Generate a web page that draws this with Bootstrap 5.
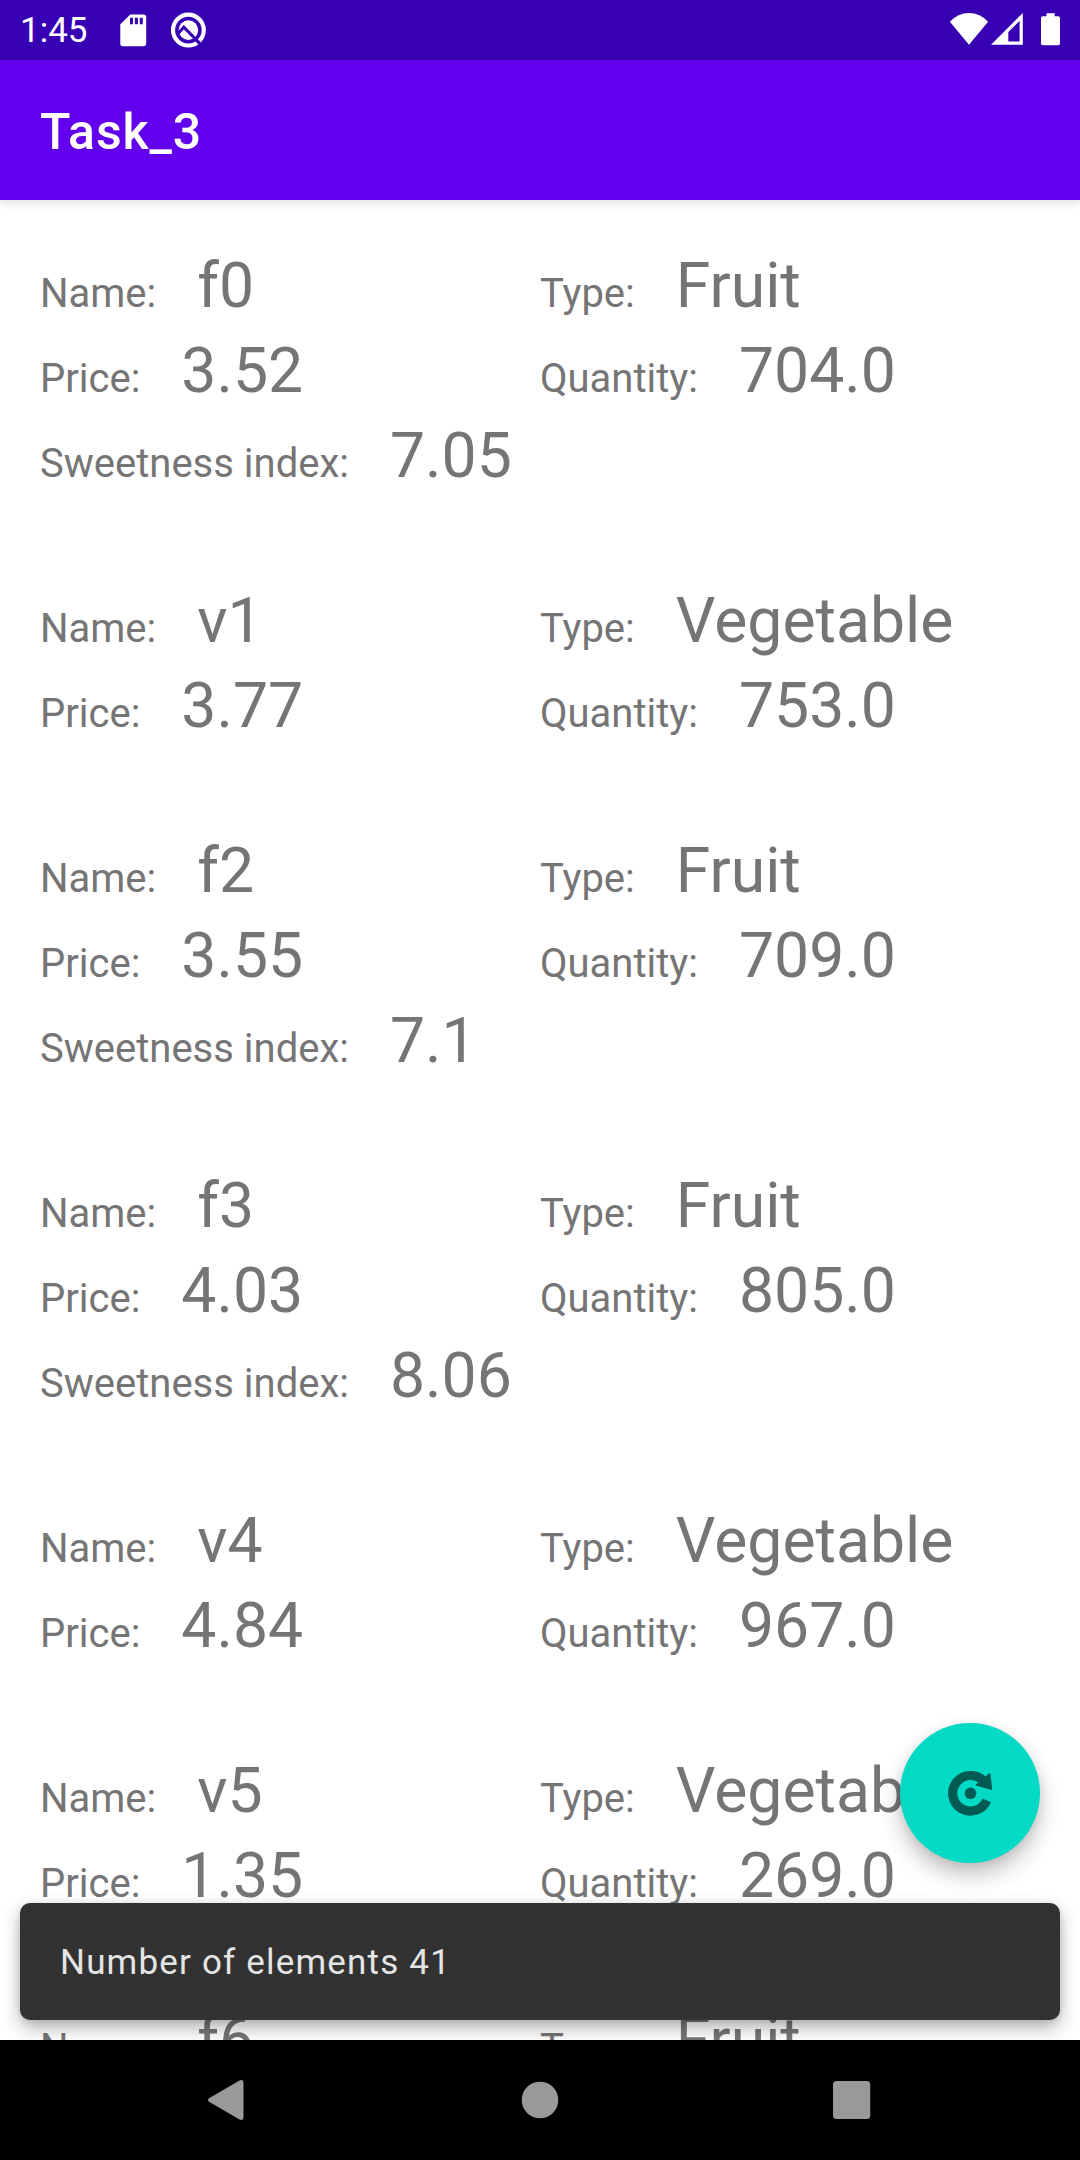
<!DOCTYPE html>
<html lang="en">
<head>
<meta charset="utf-8">
<meta name="viewport" content="width=device-width, initial-scale=1">
<title>Task_3</title>
<link href="https://cdn.jsdelivr.net/npm/bootstrap@5.3.0/dist/css/bootstrap.min.css" rel="stylesheet">
<style>
  body { font-family: Roboto, "Liberation Sans", sans-serif; color: #757575; background: #fff; }
  .screen { width: 1080px; height: 2160px; }
  .status-bar { height: 60px; background: #3700b3; padding: 0 20px; font-size: 35px; line-height: 58px; }
  .status-clock { width: 100px; padding-top: 2px; }
  .app-bar { height: 140px; padding: 4px 40px 0; background: #6200ee; z-index: 2; box-shadow: 0 3px 9px rgba(0,0,0,.13); }
  .app-title { font-size: 50px; font-weight: 500; letter-spacing: .9px; line-height: 60px; }
  .content-area { min-height: 0; }
  .produce-list { padding: 43px 40px 0; }
  .produce-item { margin-bottom: 80px; }
  .field { height: 85px; gap: 41px; white-space: nowrap; }
  .field dt { font-size: 40px; font-weight: 400; line-height: 85px; }
  .field dd { font-size: 62.5px; line-height: 85px; margin: 0; }
  .fab { right: 40px; bottom: 177px; width: 140px; height: 140px; background: #03dac5; border: 0;
         box-shadow: 0 12px 22px rgba(0,0,0,.24), 0 2px 10px rgba(0,0,0,.08); }
  .fab:hover { background: #03dac5; }
  .snackbar { left: 20px; right: 20px; bottom: 20px; height: 117px; padding: 4px 40px 0; border-radius: 10px;
              background: #323232; color: #e4e4e4; font-size: 35px; letter-spacing: 1.18px;
              box-shadow: 0 8px 18px rgba(0,0,0,.3), 0 1px 6px rgba(0,0,0,.1); }
  .nav-keys { height: 120px; background: #000; padding: 0 209px 0 208px; z-index: 3; }
</style>
</head>
<body>
<div class="screen d-flex flex-column overflow-hidden">
  <header class="status-bar d-flex align-items-center justify-content-between text-white flex-shrink-0">
    <div class="d-flex align-items-center">
      <span class="status-clock">1:45</span>
      <svg width="90" height="60" viewBox="120 0 90 60" fill="#fff">
        <path fill-rule="evenodd" d="M130.3 14.5H143.5a2.7 2.7 0 0 1 2.7 2.7V43.5a2.7 2.7 0 0 1-2.7 2.7H123a2.7 2.7 0 0 1-2.7-2.7V24.3ZM130 17.8V24.3H133V17.8ZM134.9 17.8V24.3H137.9V17.8ZM139.8 17.8V24.3H142.8V17.8Z"/>
        <circle cx="188.4" cy="30.1" r="15.4" fill="none" stroke="#fff" stroke-width="4.2"/>
        <circle cx="188.4" cy="30.1" r="9.8"/>
        <path d="M177.8 33.8 183.8 27.2 199.8 43.4" fill="none" stroke="#3700b3" stroke-width="3"/>
        <path d="M196.2 40.2 201.6 46.4" fill="none" stroke="#3700b3" stroke-width="2.6"/>
      </svg>
    </div>
    <svg width="112" height="60" viewBox="948 0 112 60" fill="#fff">
      <path d="M949.9 21.7Q958 13 969 13T988.1 21.7L969 44.7Z"/>
      <path fill-rule="evenodd" d="M991 44.8 1022.8 13V44.8ZM1008.3 41.6H1019.6V20.8L1008.3 32.1Z"/>
      <path d="M1046.5 13.2H1054.7V16.3H1058.2a1.8 1.8 0 0 1 1.8 1.8V43.5a1.8 1.8 0 0 1-1.8 1.8H1042.8a1.8 1.8 0 0 1-1.8-1.8V18.1a1.8 1.8 0 0 1 1.8-1.8H1046.5Z"/>
    </svg>
  </header>

  <nav class="app-bar navbar flex-shrink-0 position-relative">
    <h1 class="app-title text-white mb-0">Task_3</h1>
  </nav>

  <main class="content-area flex-grow-1 position-relative overflow-hidden">
    <div class="produce-list">
      <dl class="produce-item row g-0">
        <div class="field col-6 d-flex align-items-baseline"><dt>Name:</dt><dd>f0</dd></div>
        <div class="field col-6 d-flex align-items-baseline"><dt>Type:</dt><dd>Fruit</dd></div>
        <div class="field col-6 d-flex align-items-baseline"><dt>Price:</dt><dd>3.52</dd></div>
        <div class="field col-6 d-flex align-items-baseline"><dt>Quantity:</dt><dd>704.0</dd></div>
        <div class="field col-12 d-flex align-items-baseline"><dt>Sweetness index:</dt><dd>7.05</dd></div>
      </dl>
      <dl class="produce-item row g-0">
        <div class="field col-6 d-flex align-items-baseline"><dt>Name:</dt><dd>v1</dd></div>
        <div class="field col-6 d-flex align-items-baseline"><dt>Type:</dt><dd>Vegetable</dd></div>
        <div class="field col-6 d-flex align-items-baseline"><dt>Price:</dt><dd>3.77</dd></div>
        <div class="field col-6 d-flex align-items-baseline"><dt>Quantity:</dt><dd>753.0</dd></div>
      </dl>
      <dl class="produce-item row g-0">
        <div class="field col-6 d-flex align-items-baseline"><dt>Name:</dt><dd>f2</dd></div>
        <div class="field col-6 d-flex align-items-baseline"><dt>Type:</dt><dd>Fruit</dd></div>
        <div class="field col-6 d-flex align-items-baseline"><dt>Price:</dt><dd>3.55</dd></div>
        <div class="field col-6 d-flex align-items-baseline"><dt>Quantity:</dt><dd>709.0</dd></div>
        <div class="field col-12 d-flex align-items-baseline"><dt>Sweetness index:</dt><dd>7.1</dd></div>
      </dl>
      <dl class="produce-item row g-0">
        <div class="field col-6 d-flex align-items-baseline"><dt>Name:</dt><dd>f3</dd></div>
        <div class="field col-6 d-flex align-items-baseline"><dt>Type:</dt><dd>Fruit</dd></div>
        <div class="field col-6 d-flex align-items-baseline"><dt>Price:</dt><dd>4.03</dd></div>
        <div class="field col-6 d-flex align-items-baseline"><dt>Quantity:</dt><dd>805.0</dd></div>
        <div class="field col-12 d-flex align-items-baseline"><dt>Sweetness index:</dt><dd>8.06</dd></div>
      </dl>
      <dl class="produce-item row g-0">
        <div class="field col-6 d-flex align-items-baseline"><dt>Name:</dt><dd>v4</dd></div>
        <div class="field col-6 d-flex align-items-baseline"><dt>Type:</dt><dd>Vegetable</dd></div>
        <div class="field col-6 d-flex align-items-baseline"><dt>Price:</dt><dd>4.84</dd></div>
        <div class="field col-6 d-flex align-items-baseline"><dt>Quantity:</dt><dd>967.0</dd></div>
      </dl>
      <dl class="produce-item row g-0">
        <div class="field col-6 d-flex align-items-baseline"><dt>Name:</dt><dd>v5</dd></div>
        <div class="field col-6 d-flex align-items-baseline"><dt>Type:</dt><dd>Vegetable</dd></div>
        <div class="field col-6 d-flex align-items-baseline"><dt>Price:</dt><dd>1.35</dd></div>
        <div class="field col-6 d-flex align-items-baseline"><dt>Quantity:</dt><dd>269.0</dd></div>
      </dl>
      <dl class="produce-item row g-0">
        <div class="field col-6 d-flex align-items-baseline"><dt>Name:</dt><dd>f6</dd></div>
        <div class="field col-6 d-flex align-items-baseline"><dt>Type:</dt><dd>Fruit</dd></div>
      </dl>
    </div>

    <button type="button" class="fab btn rounded-circle position-absolute d-flex align-items-center justify-content-center p-0" aria-label="Refresh">
      <svg width="60" height="60" viewBox="-30.5 -30.3 60 60">
        <path d="M12.8 -12.4A17.8 17.8 0 1 0 16.3 7.1" fill="none" stroke="#015b52" stroke-width="9.2"/>
        <path d="M19 -19 20.6 -4.4 6.2 -8.4Z" fill="#015b52" stroke="#015b52" stroke-width="2" stroke-linejoin="round"/>
        <circle r="5.8" fill="#015b52"/>
      </svg>
    </button>

    <div class="snackbar position-absolute d-flex align-items-center" role="status">Number of elements 41</div>
  </main>

  <footer class="nav-keys d-flex align-items-center justify-content-between flex-shrink-0 position-relative">
    <svg width="36" height="40" viewBox="0 0 36 40" fill="#999"><path d="M1 18.2 31.5 .5Q35.5 -1 35.5 3V37Q35.5 41 31.5 39.5L1 21.8Q-1 20 1 18.2Z"/></svg>
    <svg width="40" height="38" viewBox="0 0 40 38" fill="#999"><circle cx="21" cy="19" r="18.3"/></svg>
    <svg width="38" height="38" viewBox="0 0 38 38" fill="#999"><rect width="37.2" height="38" rx="3.5"/></svg>
  </footer>
</div>
<script src="https://cdn.jsdelivr.net/npm/bootstrap@5.3.0/dist/js/bootstrap.bundle.min.js"></script>
</body>
</html>
